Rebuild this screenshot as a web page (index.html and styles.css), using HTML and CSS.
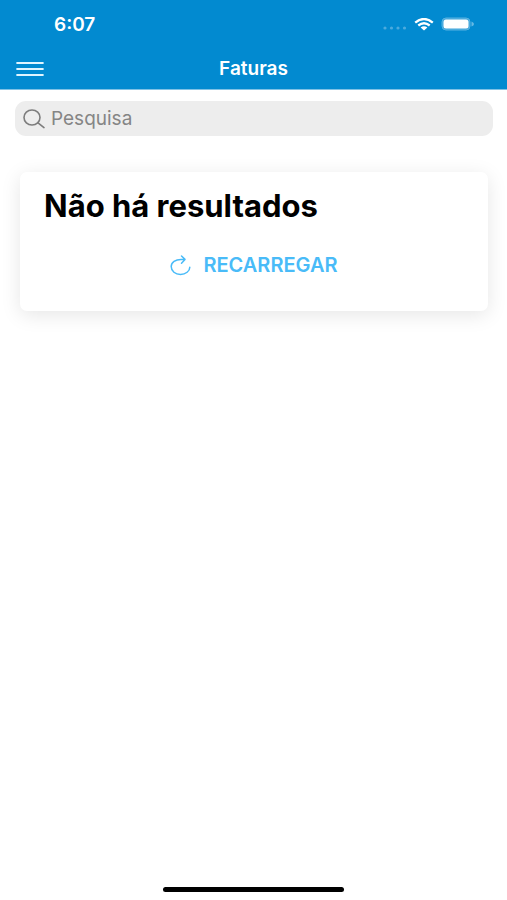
FILE: index.html
```html
<!DOCTYPE html>
<html lang="pt">
<head>
<meta charset="utf-8">
<meta name="viewport" content="width=device-width, initial-scale=1">
<title>Faturas</title>
<link rel="stylesheet" href="styles.css">
</head>
<body>
<header class="header">
  <div class="status">
    <time class="clock">6:07</time>
    <div class="indicators">
      <svg class="signal" viewBox="0 0 24 4" aria-hidden="true"><circle cx="2" cy="2" r="1.6"/><circle cx="8.5" cy="2" r="1.6"/><circle cx="15" cy="2" r="1.6"/><circle cx="21.5" cy="2" r="1.6"/></svg>
      <svg class="wifi" viewBox="0 0 20 13" aria-hidden="true"><path d="M1.2 4.6Q10-2.6 18.800 4.600M4.300 7.500Q10 3 15.700 7.500" fill="none" stroke="#fff" stroke-width="2.300"/><path d="M6.600 9.600Q10 7 13.400 9.600L10 12.600Z" fill="#fff"/></svg>
      <svg class="battery" viewBox="0 0 34 14" aria-hidden="true"><rect x="1" y="1" width="28" height="12" rx="4" fill="#3fa5db" stroke="#58b2e1" stroke-width="1"/><rect x="2.500" y="2.500" width="25" height="9" rx="2.500" fill="#fff"/><path d="M30.500 4.500Q33 5.500 33 7T30.500 9.500Z" fill="#66b9e3"/></svg>
    </div>
  </div>
  <nav class="navbar">
    <button class="menu" type="button" aria-label="Menu">
      <svg viewBox="0 0 28 16" aria-hidden="true"><path d="M1.200 2H26.800M1.200 8H26.800M1.200 14H26.800" fill="none" stroke="#e0f5ff" stroke-width="2.200" stroke-linecap="round"/></svg>
    </button>
    <h1 class="title">Faturas</h1>
  </nav>
</header>
<main class="content">
  <label class="search">
    <svg class="search-icon" viewBox="0 0 24 20" aria-hidden="true"><ellipse cx="9" cy="8.500" rx="8" ry="7.500"/><path d="M15 13.800L21 18.600"/></svg>
    <input class="search-input" type="search" placeholder="Pesquisa" aria-label="Pesquisa">
  </label>
  <section class="card">
    <h2 class="message">Não há resultados</h2>
    <button class="reload" type="button">
      <svg class="reload-icon" viewBox="0 0 22 22" aria-hidden="true"><path d="M14.800 5.400H11C5.500 5.400 1.200 8.200 1.200 12.600S5.300 20.500 10.500 20.500S19.800 17 19.800 13.200M11.500 2L15 5.400L11.500 9.200"/></svg>
      <span>RECARREGAR</span>
    </button>
  </section>
</main>
<footer class="home"><div class="home-bar"></div></footer>
</body>
</html>
```

FILE: styles.css
```css
* { box-sizing: border-box; }

body {
  margin: 0;
  min-height: 100vh;
  display: flex;
  flex-direction: column;
  background: #fff;
  color: #000;
  font-family: Inter, "Liberation Sans", sans-serif;
}

button {
  margin: 0;
  padding: 0;
  border: 0;
  background: none;
  font: inherit;
  cursor: pointer;
}

svg { display: block; }

.header {
  background: #028ad0;
  color: #fff;
  border-bottom: 1px solid #7fc2e6;
}

.status {
  height: 48px;
  padding: 0 32px 0 54px;
  display: flex;
  align-items: center;
  justify-content: space-between;
}

.clock {
  font-size: 19px;
  font-weight: 600;
}

.indicators {
  display: flex;
  align-items: center;
  gap: 7px;
}

.signal {
  width: 24px;
  height: 4px;
  margin-top: 8px;
  fill: #4caadd;
}

.wifi {
  width: 20px;
  height: 13px;
}

.battery {
  width: 34px;
  height: 14px;
}

.navbar {
  height: 41px;
  padding: 0 16px;
  display: grid;
  grid-template-columns: 1fr auto 1fr;
  align-items: center;
}

.menu {
  width: 28px;
  height: 16px;
}

.title {
  margin: 0;
  font-size: 19px;
  font-weight: 600;
  line-height: 24px;
}

.content {
  flex: 1;
  padding: 11px 14px 0 15px;
}

.search {
  height: 35px;
  padding: 0 8px;
  display: flex;
  align-items: center;
  gap: 4px;
  border-radius: 11px;
  background: #ededed;
}

.search-icon {
  flex: none;
  width: 24px;
  height: 20px;
  fill: none;
  stroke: #7d7d7d;
  stroke-width: 1.6;
  stroke-linecap: round;
}

.search-input {
  flex: 1;
  min-width: 0;
  padding: 0;
  border: 0;
  outline: 0;
  background: none;
  font: 19px/24px Inter, "Liberation Sans", sans-serif;
}

.search-input::placeholder {
  color: #858585;
  opacity: 1;
}

.card {
  margin: 36px 5px 0;
  padding: 16px 24px 35px;
  display: flex;
  flex-direction: column;
  gap: 30px;
  border-radius: 7px;
  background: #fff;
  box-shadow: 0 4px 20px rgba(0, 0, 0, 0.1);
}

.message {
  margin: 0;
  font-size: 31px;
  font-weight: 700;
  line-height: 36px;
}

.reload {
  align-self: center;
  display: flex;
  align-items: center;
  gap: 11px;
  color: #49bbf8;
  font-size: 20px;
  font-weight: 600;
  line-height: 22px;
}

.reload-icon {
  width: 22px;
  height: 22px;
  fill: none;
  stroke: currentColor;
  stroke-width: 1.5;
  stroke-linecap: round;
  stroke-linejoin: round;
}

.home {
  padding: 0 16px 8px;
  display: flex;
  justify-content: center;
}

.home-bar {
  width: 38%;
  height: 5px;
  border-radius: 3px;
  background: #000;
}
```
